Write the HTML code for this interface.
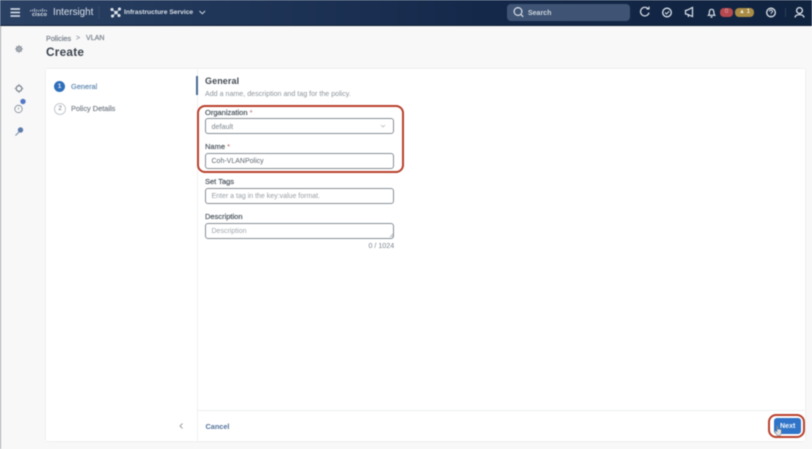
<!DOCTYPE html>
<html><head><meta charset="utf-8">
<style>
html,body{margin:0;padding:0}
body{width:812px;height:449px;overflow:hidden;background:#f8f8f9;position:relative;font-family:"Liberation Sans",sans-serif;color:#39424e}
#w{position:absolute;left:0;top:0;width:812px;height:449px;filter:blur(.42px)}
.a{position:absolute;white-space:nowrap}
.m{-webkit-text-stroke:.2px currentColor}
.hdr{left:0;top:0;width:812px;height:25px;background:linear-gradient(90deg,#2c4265 0,#1f3557 30%,#14284a 60%,#10233f 100%);border-bottom:1px solid #0c1c34}
.in{position:absolute;left:205px;width:187px;height:14px;border:1px solid #868e96;border-radius:3px;background:#fff;font-size:7.2px;line-height:16px;text-indent:5.5px;color:#7d858d}
.lb{position:absolute;left:205px;font-size:7.5px;color:#4f5861;-webkit-text-stroke:.2px #4f5861}
.red{position:absolute;border:2px solid #b8402c;box-sizing:border-box}
svg{position:absolute;overflow:visible}
</style></head><body><div id="w">
<div class="a hdr"></div>
<svg style="left:0;top:0" width="812" height="25" fill="none" stroke="#dfe5ec" stroke-width="1.3">
<path d="M10.5 9H20M10.5 12.500H20M10.5 16H20" stroke-width="1.400"/>
<path d="M99 6V19" stroke="#3d5273" stroke-width=".8"/>
<path d="M30.500 10v1.500M32.500 9.500v2M34.500 8.500v3.500M36.500 9.500v2M38.500 10v1.500M40.500 9.500v2M42.500 8.500v3.500M44.500 9.500v2M46.500 10v1.500" stroke-width=".8" stroke="#cfd6df"/>
<g fill="#dfe5ec" stroke="#dfe5ec" stroke-width=".7">
<path d="M112 9.500L116 12.500M116 12.500L119.500 9.500M116 12.500L113 16M116 12.500L119 15.500" />
<circle cx="112" cy="9.500" r="1.200"/><circle cx="119.500" cy="9" r="1.200"/><circle cx="116" cy="12.500" r="1.400"/><circle cx="112.500" cy="16" r="1.200"/><circle cx="119" cy="15.500" r="1.200"/>
</g>
<path d="M199.500 11l2.800 2.800 2.800-2.800" stroke-width=".9"/>
<path d="M648 8.700a4.300 4.300 0 1 0 1 4" stroke-width="1.200"/><path d="M646.500 9h2.500V6.500" stroke-width="1"/>
<circle cx="667" cy="12.500" r="4.300"/><path d="M665 12.500l1.500 1.500 2.700-2.800" stroke-width="1"/>
<path d="M685.500 10.500v3.500l2 .3 5 2.200V7.500l-5 2.500zM688 14.500l.6 2.500" stroke-width="1.200"/>
<path d="M708.500 15.300c1-1 .8-2.200 .9-3.500.2-3.300 4.200-3.300 4.400 0 .1 1.300 0 2.500 .9 3.500zM710.500 17h2" stroke-width="1.200"/>
<circle cx="771" cy="12.500" r="4.300"/><path d="M769.500 11.500c0-2 3-2 3 0 0 1-1.500 1-1.500 2.200M771 15v.4" stroke-width="1"/>
<path d="M785.500 8V17" stroke="#34486a" stroke-width=".7"/>
<circle cx="799.500" cy="10.500" r="2.900"/><path d="M795 17.500c.4-3.800 8.600-3.800 9 0" />
</svg>
<div class="a" style="left:32px;top:12px;font-size:5.500px;line-height:6px;font-weight:bold;color:#dfe5ec;letter-spacing:.2px">cisco</div>
<div class="a" style="left:53px;top:6px;font-size:9.800px;line-height:13px;color:#dbe1e9">Intersight</div>
<div class="a" style="left:124px;top:8px;font-size:6.700px;line-height:9px;font-weight:bold;color:#d9dfe7">Infrastructure Service</div>
<div class="a" style="left:507px;top:4px;width:123px;height:17px;border-radius:4px;background:#3f5474"></div>
<svg style="left:0;top:0" width="812" height="25" fill="none" stroke="#dbe1e9" stroke-width="1.200"><circle cx="518" cy="11.500" r="3.900"/><path d="M521 14.500l2.200 2.300"/></svg>
<div class="a" style="left:528px;top:8.500px;font-size:7px;line-height:9px;font-weight:bold;color:#cfd6df">Search</div>
<div class="a" style="left:720px;top:8px;width:13px;height:9px;border-radius:4px;background:#b6494f;color:#e3b3b3;font-size:6px;line-height:9px;text-align:center">0</div>
<div class="a" style="left:735px;top:8px;width:19px;height:9px;border-radius:4px;background:#a98c45;color:#f3ead2;font-size:6px;line-height:9px;text-align:center;font-weight:bold">▲ 1</div>

<div class="a" style="left:0;top:26px;width:1px;height:423px;background:#a6a8ab"></div>
<div class="a m" style="left:46px;top:33.500px;font-size:7.300px;line-height:9px;color:#79828b">Policies</div>
<div class="a" style="left:76px;top:33.500px;font-size:7px;line-height:9px;color:#79828b">&gt;</div>
<div class="a m" style="left:86px;top:33.500px;font-size:7.100px;line-height:9px;color:#79828b">VLAN</div>
<div class="a" style="left:46px;top:45px;font-size:11.800px;line-height:15px;font-weight:bold;color:#3a424c;letter-spacing:.25px">Create</div>

<svg style="left:0;top:0" width="40" height="150" fill="none" stroke="#7f8790" stroke-width="1">
<circle cx="19" cy="49" r="2.500" fill="#a9b0b7"/><path d="M19 45v1M19 52v1M15 49h1M22 49h1M16.200 46.200l.7.7M21.100 51.100l.7.7M21.800 46.200l-.7.7M16.900 51.100l-.7.7" stroke-width=".7"/>
<circle cx="19" cy="88.500" r="2.800" stroke-width="1.300"/><path d="M19 84v1M19 92v1M14.500 88.500h1M22.500 88.500h1" stroke-width=".8"/>
<circle cx="18.500" cy="109" r="3.700" stroke-width=".8"/><path d="M18.500 107.500v2" stroke-width=".7"/>
<circle cx="23" cy="101.500" r="2.700" fill="#5677c4" stroke="none"/>
<circle cx="20.500" cy="130" r="2.700" fill="#5d7cab" stroke="none"/><path d="M19 132l-3.500 3.500" stroke="#8295ac" stroke-width="1.200"/>
</svg>

<div class="a" style="left:46px;top:69px;width:759px;height:372px;background:#fff;border-radius:2px;box-shadow:0 0 3px rgba(0,0,0,.07)"></div>
<div class="a" style="left:197px;top:69px;width:1px;height:372px;background:#eef0f1"></div>
<div class="a" style="left:196px;top:76px;width:2px;height:19px;background:#4b6a94"></div>
<div class="a" style="left:198px;top:410px;width:607px;height:1px;background:#eceef0"></div>

<div class="a" style="left:54px;top:81px;width:11px;height:11px;border-radius:50%;background:#2f6fba;color:#e8f0f8;font-size:6.500px;line-height:11px;text-align:center;font-weight:bold">1</div>
<div class="a m" style="left:71px;top:82px;font-size:7.400px;line-height:9px;color:#6a8fb5">General</div>
<div class="a" style="left:54px;top:103px;width:10px;height:10px;border-radius:50%;border:.7px solid #c5c9ce;color:#6b737b;font-size:6.500px;line-height:10px;text-align:center">2</div>
<div class="a m" style="left:71px;top:104px;font-size:7.400px;line-height:9px;color:#7d858d">Policy Details</div>

<div class="a" style="left:205px;top:75px;font-size:9px;line-height:12px;font-weight:bold;color:#444c55;letter-spacing:.1px">General</div>
<div class="a" style="left:205px;top:90px;font-size:7.100px;line-height:9px;color:#8d949b">Add a name, description and tag for the policy.</div>

<div class="lb" style="top:107.500px;line-height:9px">Organization <span style="color:#b5675c;-webkit-text-stroke:0">*</span></div>
<div class="in" style="top:118px">default</div>
<svg style="left:0;top:0" width="400" height="140" fill="none" stroke="#b6bcc2" stroke-width=".8"><path d="M381 125l2 2 2-2"/></svg>
<div class="lb" style="top:142px;line-height:9px">Name <span style="color:#b5675c;-webkit-text-stroke:0">*</span></div>
<div class="in" style="top:153px;color:#5f6770;font-size:7px">Coh-VLANPolicy</div>
<div class="red" style="left:197px;top:105px;width:207px;height:68px;border-radius:8px"></div>
<div class="lb" style="top:177px;line-height:9px">Set Tags</div>
<div class="in" style="top:188px;color:#989ea5;font-size:7px">Enter a tag in the key:value format.</div>
<div class="lb" style="top:212px;line-height:9px">Description</div>
<div class="in" style="top:223px;color:#a1a7ad;font-size:7px">Description</div>
<svg style="left:0;top:0" width="400" height="240" fill="none" stroke="#8f979f" stroke-width=".6"><path d="M390 237l3-3M392 237l1-1"/></svg>
<div class="a" style="left:368.500px;top:242px;font-size:7.100px;line-height:9px;color:#7d858d">0 / 1024</div>

<svg style="left:0;top:0" width="200" height="440" fill="none" stroke="#9aa1a8" stroke-width="1"><path d="M182.500 423.500l-2.500 2.500 2.500 2.500"/></svg>
<div class="a" style="left:205.500px;top:421.500px;font-size:7.300px;line-height:10px;font-weight:bold;color:#55749c">Cancel</div>

<div class="a" style="left:774px;top:418px;width:27px;height:16px;border-radius:3px;background:#2f74c8;color:#eef4fb;font-size:7.100px;line-height:16px;font-weight:bold;text-indent:6px">Next</div>
<div class="red" style="left:768px;top:414px;width:37px;height:24px;border-radius:8px"></div>
<svg style="left:0;top:0" width="812" height="449"><path d="M777 426.500v5.500l-1-1c-.8-.5-1.500.3-1 1l2 3.500h3.500l.8-3v-2.500c0-1-1.300-1-1.300-.2 0-1-1.300-1-1.300-.2 0-.8-1-.8-1-.2v-2.900c0-.8-1-.8-1 0z" fill="#dfe1e4" stroke="#6f747a" stroke-width=".5"/></svg>
</div></body></html>
